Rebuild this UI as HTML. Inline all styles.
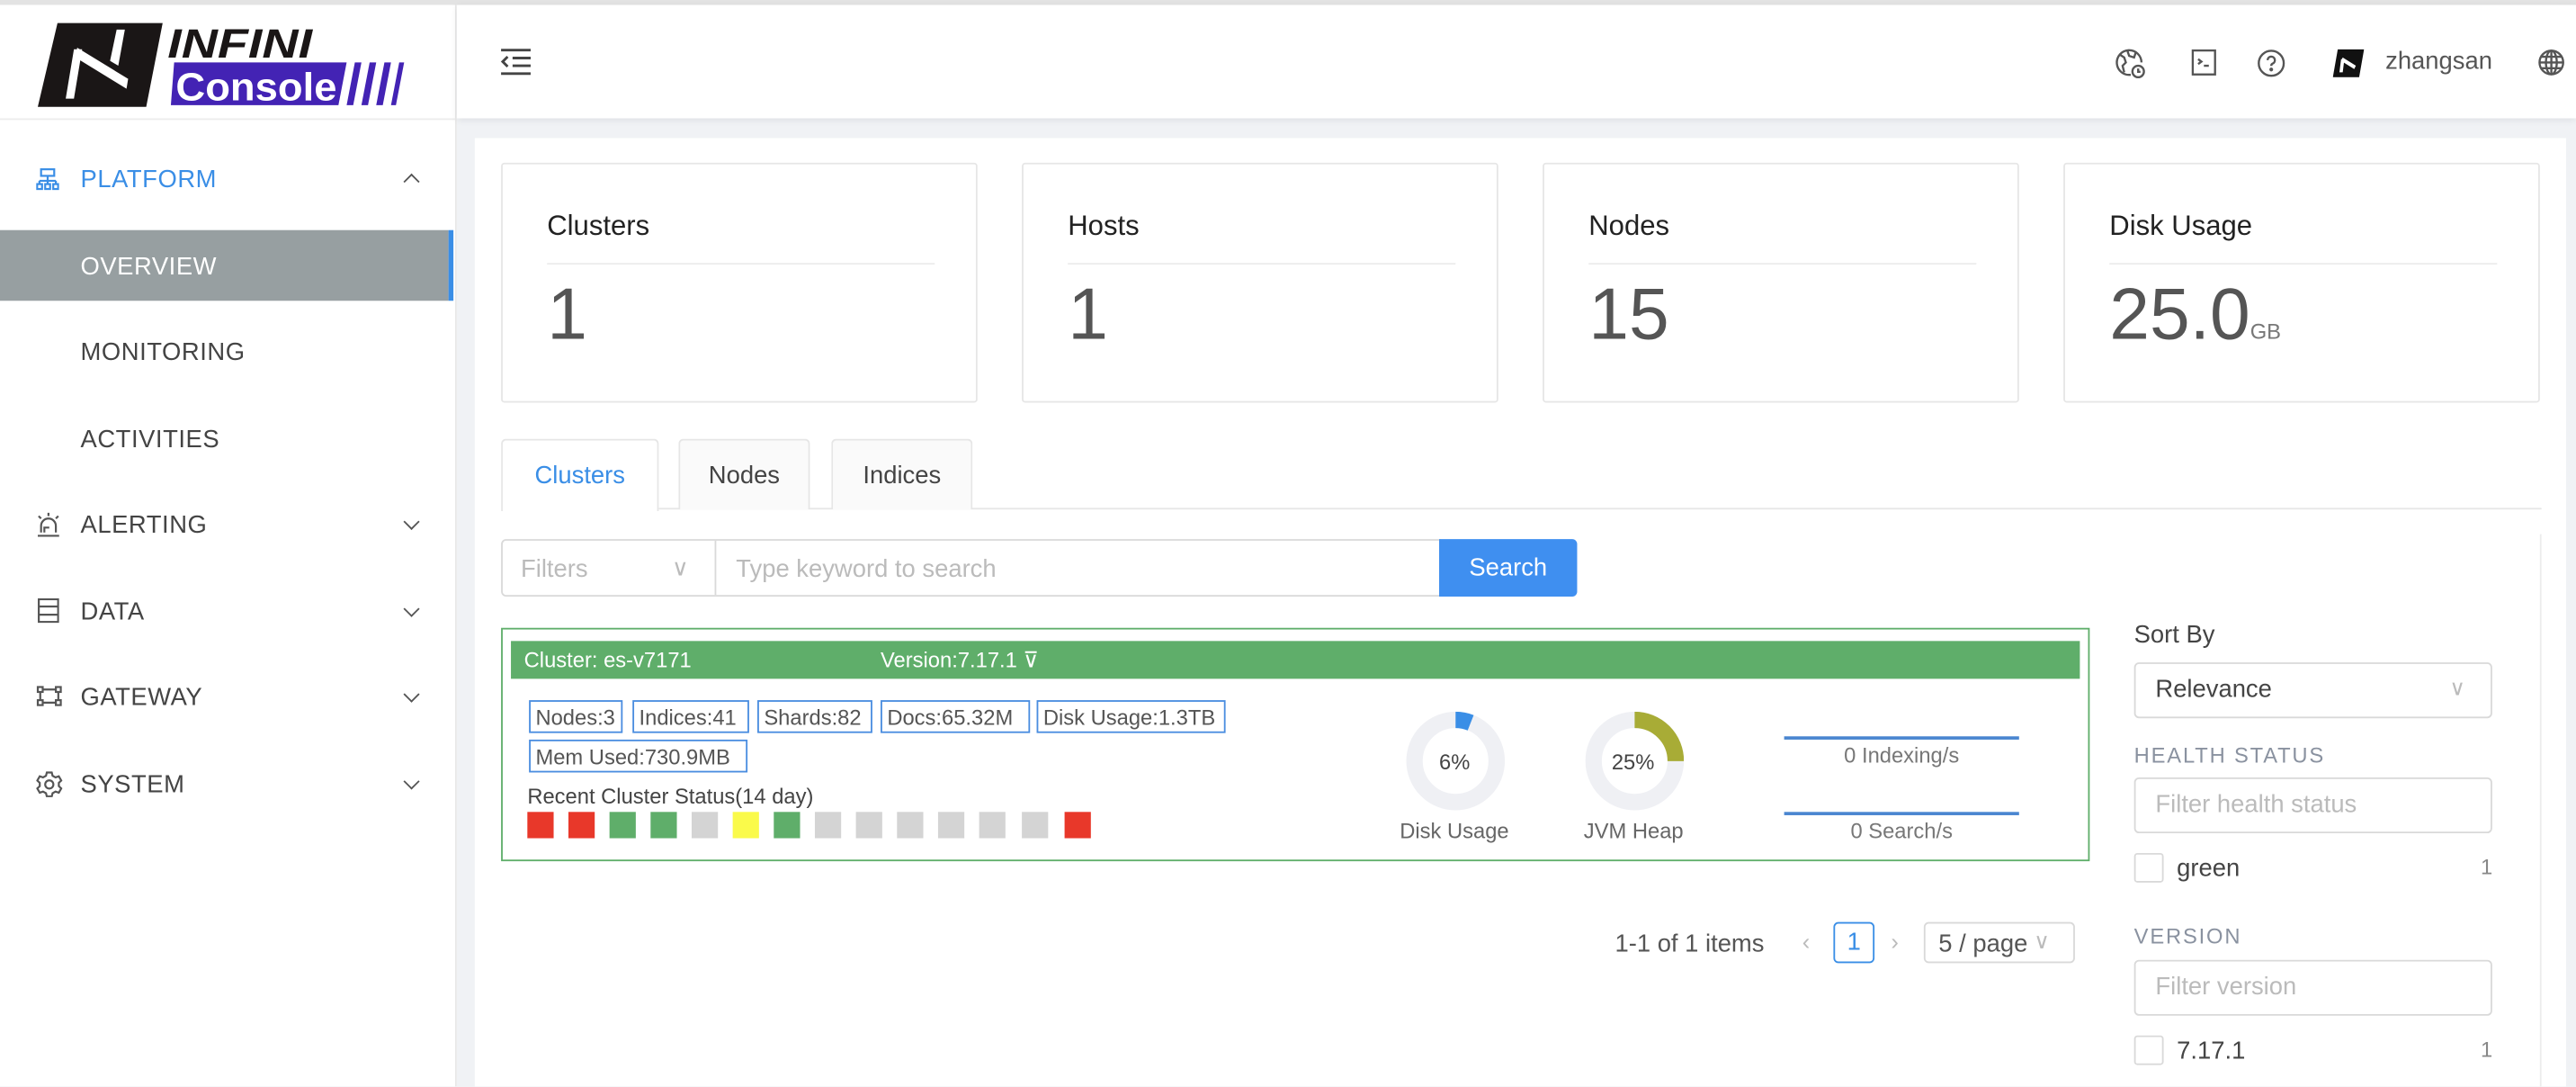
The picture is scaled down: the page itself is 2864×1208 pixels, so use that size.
<!DOCTYPE html>
<html><head><meta charset="utf-8"><style>
html,body{margin:0;padding:0;width:2864px;height:1208px;overflow:hidden;background:#f0f2f5}
#w{position:absolute;left:0;top:0;width:1568px;height:661.4px;transform:scale(1.82653);transform-origin:0 0;font-family:"Liberation Sans",sans-serif;background:#f0f2f5;overflow:hidden}
.a{position:absolute}
.t{position:absolute;white-space:nowrap;line-height:1}
.side{left:0;top:3px;width:277px;height:660px;background:#fff;border-right:1px solid #e8e8e8}
.mi{position:absolute;left:49px;font-size:15px;color:#444;letter-spacing:.3px;line-height:1}
.chev{position:absolute;left:247px;width:6px;height:6px;border-right:1.5px solid #555;border-bottom:1.5px solid #555;transform:rotate(45deg)}
.card{position:absolute;top:99px;width:288px;height:144px;border:1px solid #e6e6e6;border-radius:2px;background:#fff}
.card .h{position:absolute;left:27px;top:28px;font-size:17px;color:#222}
.card .d{position:absolute;left:27px;top:60px;width:236px;height:1px;background:#ececec}
.card .v{position:absolute;left:27px;top:70px;font-size:44px;color:#555;line-height:1}
.tab{position:absolute;top:267px;height:43px;border:1px solid #e6e6e6;border-bottom:none;border-radius:3px 3px 0 0;background:#fafafa;font-size:15px;color:#444;text-align:center;line-height:43px;box-sizing:border-box}
.tag{position:absolute;height:20px;border:1px solid #4a8de0;font-size:13px;color:#555;line-height:20px;padding:0 3px;box-sizing:border-box;white-space:nowrap}
.sq{position:absolute;top:494px;width:16px;height:16px}
.inp{position:absolute;left:1299px;width:218px;height:34px;border:1px solid #d9d9d9;border-radius:3px;box-sizing:border-box;background:#fff;font-size:15px;color:#bbb;line-height:32px;padding-left:12px}
.cb{position:absolute;left:1299px;width:16px;height:16px;border:1px solid #d9d9d9;border-radius:2px;background:#fff}
.lbl{position:absolute;left:1299px;font-size:13px;color:#8a92a0;letter-spacing:1px;line-height:1}
</style></head><body><div id="w">
<div class="a" style="left:0;top:0;width:1568px;height:3px;background:#e3e3e3"></div>
<!-- sidebar -->
<div class="a side"></div>
<div class="a" style="left:0;top:72px;width:277px;height:1px;background:#ececec"></div>
<svg class="a" style="left:20px;top:10px" width="230" height="58" viewBox="0 0 230 58">
<polygon points="15,4 79,4 69,55 3,55" fill="#1a1616"/>
<polygon points="25,20 30,20 25,50 20,50" fill="#fff"/>
<polygon points="27,19 58,38 57,44 26,25" fill="#fff"/>
<polygon points="51,8 56,8 52,30 47,27" fill="#fff"/>
<text x="82" y="25" font-family="Liberation Sans" font-weight="bold" font-style="italic" font-size="25" fill="#1a1616" textLength="88" lengthAdjust="spacingAndGlyphs">INFINI</text>
<polygon points="86,28 191,28 186,54 84,54" fill="#4323b4"/>
<text x="87" y="51" font-family="Liberation Sans" font-weight="bold" font-size="24" fill="#fff" textLength="98" lengthAdjust="spacingAndGlyphs">Console</text>
<polygon points="196,28 200,28 195,54 191,54" fill="#4323b4"/>
<polygon points="205,28 209,28 204,54 200,54" fill="#4323b4"/>
<polygon points="214,28 218,28 213,54 209,54" fill="#4323b4"/>
<polygon points="223,28 226,28 221,54 218,54" fill="#4323b4"/>
</svg>
<svg class="a" style="left:22px;top:102px" width="14" height="14" viewBox="0 0 14 14" fill="none" stroke="#3a8ee6" stroke-width="1.2"><rect x="3" y="1" width="8" height="4"/><path d="M7 5v3M2 8h10M2 8v2M7 8v2M12 8v2"/><rect x="0.6" y="10" width="3" height="3"/><rect x="5.5" y="10" width="3" height="3"/><rect x="10.4" y="10" width="3" height="3"/></svg>
<div class="mi" style="top:102px;color:#3a8ee6">PLATFORM</div>
<div class="chev" style="top:107px;transform:rotate(225deg)"></div>
<div class="a" style="left:0;top:140px;width:273px;height:43px;background:#979fa1"></div>
<div class="a" style="left:273px;top:140px;width:3px;height:43px;background:#3a8ee6"></div>
<div class="mi" style="top:155px;color:#fff">OVERVIEW</div>
<div class="mi" style="top:207px">MONITORING</div>
<div class="mi" style="top:260px">ACTIVITIES</div>
<svg class="a" style="left:22px;top:311px" width="15" height="16" viewBox="0 0 15 16" fill="none" stroke="#555" stroke-width="1.2"><path d="M3 13V9a4.5 4.5 0 0 1 9 0v4M1 15h13M5 13v-3h3"/><path d="M7.5 1v2M1.5 3l1.5 1.5M13.5 3L12 4.5"/></svg>
<div class="mi" style="top:312px">ALERTING</div><div class="chev" style="top:314px"></div>
<svg class="a" style="left:23px;top:364px" width="13" height="15" viewBox="0 0 13 15" fill="none" stroke="#555" stroke-width="1.2"><rect x="0.6" y="0.6" width="11.8" height="13.8"/><path d="M1 5h11M1 10h11"/></svg>
<div class="mi" style="top:365px">DATA</div><div class="chev" style="top:367px"></div>
<svg class="a" style="left:22px;top:417px" width="16" height="13" viewBox="0 0 16 13" fill="none" stroke="#555" stroke-width="1.2"><rect x="1" y="1" width="3" height="3"/><rect x="12" y="1" width="3" height="3"/><rect x="1" y="9" width="3" height="3"/><rect x="12" y="9" width="3" height="3"/><path d="M4 2.5h8M4 10.5h8M2.5 4v5M13.5 4v5"/></svg>
<div class="mi" style="top:417px">GATEWAY</div><div class="chev" style="top:419px"></div>
<svg class="a" style="left:22px;top:469px" width="16" height="16" viewBox="0 0 16 16" fill="none" stroke="#555" stroke-width="1.2"><path d="M6.5 1h3l.5 2 1.8 1 2-.7 1.5 2.6-1.5 1.4v2l1.5 1.4-1.5 2.6-2-.7-1.8 1-.5 2h-3l-.5-2-1.8-1-2 .7L.7 10.7 2.2 9.3v-2L.7 5.9 2.2 3.3l2 .7 1.8-1z"/><circle cx="8" cy="8.3" r="2.5"/></svg>
<div class="mi" style="top:470px">SYSTEM</div><div class="chev" style="top:472px"></div>
<!-- header -->
<div class="a" style="left:278px;top:3px;width:1290px;height:69px;background:#fff;box-shadow:0 1px 4px rgba(0,0,0,.08)"></div>
<svg class="a" style="left:304px;top:29px" width="20" height="17" viewBox="0 0 20 17" fill="none" stroke="#444" stroke-width="1.6"><path d="M1 1.5h18M8 6.3h11M8 11h11M1 15.8h18M5 5.5L2 8.5l3 3"/></svg>
<svg class="a" style="left:1287px;top:29px" width="19" height="19" viewBox="0 0 19 19" fill="none" stroke="#555" stroke-width="1.3"><path d="M10 16.5A7.5 7.5 0 1 1 16.5 9"/><path d="M3 4l3 2 1 3-2 2 1 4M8 2l1 3 3 1 1-3"/><circle cx="14.5" cy="14.5" r="3.5"/><path d="M14.5 12.7v2h1.4"/></svg>
<svg class="a" style="left:1334px;top:30px" width="15" height="16" viewBox="0 0 15 16" fill="none" stroke="#555" stroke-width="1.3"><rect x="0.7" y="0.7" width="13.6" height="14.6"/><path d="M4 6l2 1.5L4 9M7.5 10h3"/></svg>
<svg class="a" style="left:1374px;top:30px" width="17" height="17" viewBox="0 0 17 17" fill="none" stroke="#555" stroke-width="1.3"><circle cx="8.5" cy="8.5" r="7.6"/><path d="M6.3 6.6a2.2 2.2 0 1 1 3 2.1c-.6.3-.8.7-.8 1.4"/><circle cx="8.5" cy="12.3" r=".5" fill="#555"/></svg>
<svg class="a" style="left:1420px;top:30px" width="19" height="17" viewBox="0 0 19 17"><polygon points="3,0 19,0 16,17 0,17" fill="#111"/><polygon points="5,6 7,6 6,14 4,14" fill="#fff"/><polygon points="6,5 14,10 13,12 5,7" fill="#fff"/></svg>
<div class="t" style="left:1452px;top:30px;font-size:15px;color:#555">zhangsan</div>
<svg class="a" style="left:1545px;top:30px" width="16" height="16" viewBox="0 0 16 16" fill="none" stroke="#555" stroke-width="1.3"><circle cx="8" cy="8" r="7.2"/><ellipse cx="8" cy="8" rx="3.3" ry="7.2"/><path d="M.8 8h14.4M2 4.5h12M2 11.5h12M8 .8v14.4"/></svg>
<!-- main panel -->
<div class="a" style="left:289px;top:84px;width:1273px;height:590px;background:#fff"></div>
<div class="card" style="left:305px"><div class="h">Clusters</div><div class="d"></div><div class="v">1</div></div>
<div class="card" style="left:622px"><div class="h">Hosts</div><div class="d"></div><div class="v">1</div></div>
<div class="card" style="left:939px"><div class="h">Nodes</div><div class="d"></div><div class="v">15</div></div>
<div class="card" style="left:1256px"><div class="h">Disk Usage</div><div class="d"></div><div class="v">25.0<span style="font-size:13px;color:#777">GB</span></div></div>
<!-- tabs -->
<div class="a" style="left:401px;top:309px;width:1146px;height:1px;background:#e6e6e6"></div>
<div class="tab" style="left:305px;width:96px;background:#fff;color:#3a8ee6;height:44px">Clusters</div>
<div class="tab" style="left:413px;width:80px">Nodes</div>
<div class="tab" style="left:506px;width:86px">Indices</div>
<div class="a" style="left:1546px;top:325px;width:1px;height:340px;background:#ececec"></div>
<!-- search -->
<div class="a" style="left:305px;top:328px;width:572px;height:35px;border:1px solid #d9d9d9;border-radius:3px 0 0 3px;box-sizing:border-box"></div>
<div class="a" style="left:435px;top:329px;width:1px;height:33px;background:#d9d9d9"></div>
<div class="t" style="left:317px;top:339px;font-size:15px;color:#bbb">Filters</div>
<div class="t" style="left:409px;top:338px;font-size:14px;color:#bbb">∨</div>
<div class="t" style="left:448px;top:339px;font-size:15px;color:#bbb">Type keyword to search</div>
<div class="a" style="left:876px;top:328px;width:84px;height:35px;background:#3f8ff0;border-radius:0 3px 3px 0;color:#fff;font-size:15px;line-height:36px;text-align:center">Search</div>
<!-- cluster card -->
<div class="a" style="left:305px;top:382px;width:967px;height:142px;border:1.5px solid #5fae6a;box-sizing:border-box"></div>
<div class="a" style="left:311px;top:390px;width:955px;height:23px;background:#5fae6a"></div>
<div class="t" style="left:319px;top:395px;font-size:13px;color:#fff">Cluster: es-v7171</div>
<div class="t" style="left:536px;top:395px;font-size:13px;color:#fff">Version:7.17.1 ⊽</div>
<div class="tag" style="left:322px;top:426px;width:57px">Nodes:3</div>
<div class="tag" style="left:385px;top:426px;width:71px">Indices:41</div>
<div class="tag" style="left:461px;top:426px;width:70px">Shards:82</div>
<div class="tag" style="left:536px;top:426px;width:91px">Docs:65.32M</div>
<div class="tag" style="left:631px;top:426px;width:115px">Disk Usage:1.3TB</div>
<div class="tag" style="left:322px;top:450px;width:133px">Mem Used:730.9MB</div>
<div class="t" style="left:321px;top:478px;font-size:13px;color:#444">Recent Cluster Status(14 day)</div>
<div class="sq" style="left:321px;background:#e8382a"></div><div class="sq" style="left:346px;background:#e8382a"></div>
<div class="sq" style="left:371px;background:#5fae6a"></div><div class="sq" style="left:396px;background:#5fae6a"></div>
<div class="sq" style="left:421px;background:#d4d4d4"></div><div class="sq" style="left:446px;background:#fafa4a"></div>
<div class="sq" style="left:471px;background:#5fae6a"></div><div class="sq" style="left:496px;background:#d4d4d4"></div>
<div class="sq" style="left:521px;background:#d4d4d4"></div><div class="sq" style="left:546px;background:#d4d4d4"></div>
<div class="sq" style="left:571px;background:#d4d4d4"></div><div class="sq" style="left:596px;background:#d4d4d4"></div>
<div class="sq" style="left:622px;background:#d4d4d4"></div><div class="sq" style="left:648px;background:#e8382a"></div>
<svg class="a" style="left:856px;top:433px" width="60" height="60" viewBox="0 0 60 60"><circle cx="30" cy="30" r="25" fill="none" stroke="#eff0f4" stroke-width="10"/><circle cx="30" cy="30" r="25" fill="none" stroke="#3a8ee6" stroke-width="10" stroke-dasharray="9.4 200" transform="rotate(-90 30 30)"/></svg>
<div class="t" style="left:876px;top:457px;font-size:13px;color:#444">6%</div>
<div class="t" style="left:852px;top:499px;font-size:13px;color:#666">Disk Usage</div>
<svg class="a" style="left:965px;top:433px" width="60" height="60" viewBox="0 0 60 60"><circle cx="30" cy="30" r="25" fill="none" stroke="#eff0f4" stroke-width="10"/><circle cx="30" cy="30" r="25" fill="none" stroke="#a8ac36" stroke-width="10" stroke-dasharray="39.3 200" transform="rotate(-90 30 30)"/></svg>
<div class="t" style="left:981px;top:457px;font-size:13px;color:#444">25%</div>
<div class="t" style="left:964px;top:499px;font-size:13px;color:#666">JVM Heap</div>
<div class="a" style="left:1086px;top:448px;width:143px;height:1.5px;background:#4a86d0"></div>
<div class="t" style="left:1086px;width:143px;text-align:center;top:453px;font-size:13px;color:#777">0 Indexing/s</div>
<div class="a" style="left:1086px;top:494px;width:143px;height:1.5px;background:#4a86d0"></div>
<div class="t" style="left:1086px;width:143px;text-align:center;top:499px;font-size:13px;color:#777">0 Search/s</div>
<!-- pagination -->
<div class="t" style="left:983px;top:567px;font-size:15px;color:#555">1-1 of 1 items</div>
<div class="t" style="left:1097px;top:566px;font-size:14px;color:#bbb">‹</div>
<div class="a" style="left:1116px;top:561px;width:25px;height:25px;border:1px solid #3a8ee6;border-radius:3px;box-sizing:border-box;color:#3a8ee6;font-size:15px;line-height:23px;text-align:center">1</div>
<div class="t" style="left:1151px;top:566px;font-size:14px;color:#bbb">›</div>
<div class="a" style="left:1171px;top:561px;width:92px;height:25px;border:1px solid #d9d9d9;border-radius:3px;box-sizing:border-box"></div>
<div class="t" style="left:1180px;top:567px;font-size:15px;color:#555">5 / page</div>
<div class="t" style="left:1238px;top:566px;font-size:13px;color:#bbb">∨</div>
<!-- right filters -->
<div class="t" style="left:1299px;top:379px;font-size:15px;color:#444">Sort By</div>
<div class="inp" style="top:403px;color:#444">Relevance</div>
<div class="t" style="left:1491px;top:412px;font-size:13px;color:#bbb">∨</div>
<div class="lbl" style="top:453px">HEALTH STATUS</div>
<div class="inp" style="top:473px">Filter health status</div>
<div class="cb" style="top:519px"></div>
<div class="t" style="left:1325px;top:521px;font-size:15px;color:#444">green</div>
<div class="t" style="left:1510px;top:521px;font-size:13px;color:#888">1</div>
<div class="lbl" style="top:563px">VERSION</div>
<div class="inp" style="top:584px">Filter version</div>
<div class="cb" style="top:630px"></div>
<div class="t" style="left:1325px;top:632px;font-size:15px;color:#444">7.17.1</div>
<div class="t" style="left:1510px;top:632px;font-size:13px;color:#888">1</div>
</div></body></html>
